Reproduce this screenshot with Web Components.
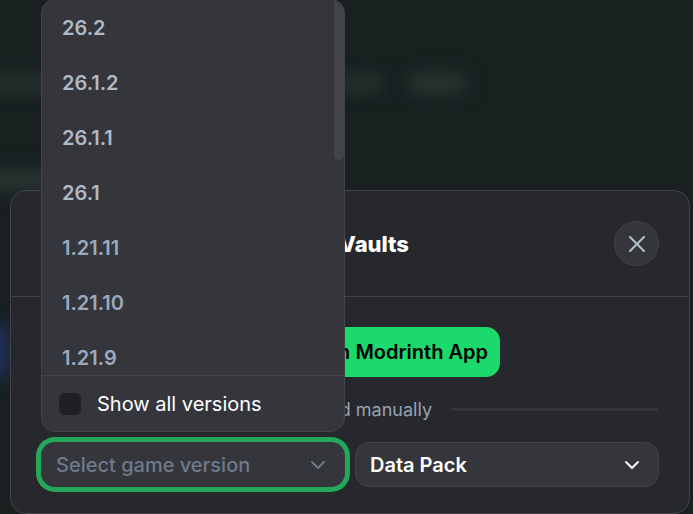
<!doctype html>
<html lang="en"><head><meta charset="utf-8"><title>Download</title>
<style>
html,body{margin:0;padding:0;height:514px;overflow:hidden;background:#182020;font-family:Inter,"Liberation Sans",sans-serif}
</style></head><body>
<page-backdrop>
  <download-modal>
    <span slot="title">Download Vaults</span>
    <version-dropdown slot="dropdown">
      <version-item>26.2</version-item>
      <version-item>26.1.2</version-item>
      <version-item>26.1.1</version-item>
      <version-item>26.1</version-item>
      <version-item old>1.21.11</version-item>
      <version-item old>1.21.10</version-item>
      <version-item old>1.21.9</version-item>
    </version-dropdown>
    <select-box slot="version" focused placeholder>Select game version</select-box>
    <select-box slot="type">Data Pack</select-box>
  </download-modal>
</page-backdrop>
<script>
function def(name,html,init){
  customElements.define(name,class extends HTMLElement{
    constructor(){super();const r=this.attachShadow({mode:'open'});r.innerHTML=html;if(init)init(r,this);}
  });
}
const chevron='<svg width="24" height="24" viewBox="0 0 24 24" fill="none" stroke="currentColor" stroke-width="2" stroke-linecap="round" stroke-linejoin="round"><path d="m6 9 6 6 6-6"/></svg>';

def('page-backdrop',`<style>
:host{display:block;position:relative;height:514px;overflow:hidden;background:#182020;padding-top:190px;box-sizing:border-box}
.b{position:absolute;filter:blur(9px);border-radius:6px}
.b1{left:-20px;top:76px;width:370px;height:15px;background:#2a3533}
.b2{left:345px;top:76px;width:38px;height:15px;background:#2a3533}
.b3{left:408px;top:74px;width:58px;height:18px;background:#2c3735}
.b4{left:-20px;top:170px;width:200px;height:20px;background:#2a3533}
.b5{left:-14px;top:324px;width:24px;height:54px;background:#20305c}
.wrap{position:relative;padding:0 3px 0 10px}
</style>
<div class="b b1"></div><div class="b b2"></div><div class="b b3"></div><div class="b b4"></div><div class="b b5"></div>
<div class="wrap"><slot></slot></div>`);

def('download-modal',`<style>
:host{display:block;position:relative;height:324px;box-sizing:border-box;background:#27282d;border:1px solid #42444a;border-radius:16px;color:#fff}
header{display:flex;align-items:center;height:106px;box-sizing:border-box;padding:0 30px;border-bottom:1px solid #42444a}
.icon{width:48px;height:48px;flex:none;margin-right:12px;border-radius:10px;background:#34363c}
.title{flex:1;min-width:0;white-space:nowrap;font-size:22px;font-weight:800;margin-left:124px;margin-top:1px}
.body{display:flex;flex-direction:column;padding:30px 30px 0}
.app{align-self:flex-start;display:flex;align-items:center;justify-content:flex-end;box-sizing:border-box;width:459px;height:50px;padding:0 12px;background:#1bd96a;border-radius:14px;color:#000;font-size:20px;font-weight:600;white-space:nowrap}
.manual{display:flex;align-items:center;justify-content:flex-end;margin-top:20px;height:24px;gap:19px}
.manual span{flex:none;color:#96a2b0;font-size:18px;white-space:nowrap}
.manual i{flex:none;width:208px;height:3px;margin-top:1px;background:#34363c;border-radius:2px}
.selects{display:flex;gap:10px;margin-top:21px}
.selects ::slotted(*){flex:1}
</style>
<header><div class="icon"></div><div class="title"><slot name="title"></slot></div><close-button></close-button></header>
<div class="body">
  <div class="app">Install with Modrinth App</div>
  <div class="manual"><span>download manually</span><i></i></div>
  <div class="selects"><slot name="version"></slot><slot name="type"></slot></div>
</div>
<slot name="dropdown"></slot>`);

def('close-button',`<style>
:host{display:grid;place-items:center;width:45px;height:45px;flex:none;border-radius:50%;background:#34363c;border:1px solid #42444a;box-sizing:border-box;color:#b0bac5}
svg{display:block}
</style><svg width="24" height="24" viewBox="0 0 24 24" fill="none" stroke="currentColor" stroke-width="2.2" stroke-linecap="round"><path d="M19 5 5 19M5 5l14 14"/></svg>`);

def('select-box',`<style>
:host{display:flex;align-items:center;justify-content:space-between;box-sizing:border-box;height:45px;padding:0 14px;background:#34363c;border:1px solid #42444a;border-radius:14px;color:#fff;font-size:20px;font-weight:600;white-space:nowrap;min-width:0}
:host([placeholder]){color:#6f7a8a;font-weight:500}
:host([focused]){border-color:transparent;box-shadow:0 0 0 5px #22a858;border-radius:14px}
svg{display:block;flex:none}
</style><slot></slot>${chevron}`);

def('version-dropdown',`<style>
:host{position:absolute;left:30px;top:-192px;width:304px;height:433px;box-sizing:border-box;background:#34363c;border:1px solid #42444a;border-radius:14px;display:flex;flex-direction:column;overflow:hidden}
.list{position:relative;flex:1;min-height:0;overflow:hidden}
.thumb{position:absolute;right:0;top:0;width:10px;height:160px;background:#42444a;border-radius:0 0 5px 5px}
footer{flex:none;height:56px;box-sizing:border-box;display:flex;align-items:center;gap:15px;padding:0 16px;border-top:1px solid #42444a;color:#fff;font-size:20px;font-weight:400;white-space:nowrap}
.box{width:24px;height:24px;box-sizing:border-box;background:#1f2025;border:1px solid #34363c;border-radius:7px;flex:none}
</style><div class="list"><slot></slot><div class="thumb"></div></div>
<footer><div class="box"></div>Show all versions</footer>`);

def('version-item',`<style>
:host{display:flex;align-items:center;height:55px;box-sizing:border-box;padding:0 20px;color:#b0bac5;font-size:20px;font-weight:600;white-space:nowrap}
:host([old]){color:#9aaac0}
</style><slot></slot>`);
</script></body></html>
